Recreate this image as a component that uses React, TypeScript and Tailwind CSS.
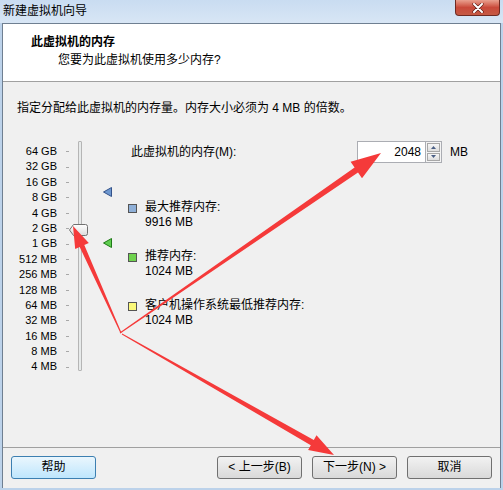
import React from 'react';

const sizes = ['64 GB', '32 GB', '16 GB', '8 GB', '4 GB', '2 GB', '1 GB', '512 MB', '256 MB', '128 MB', '64 MB', '32 MB', '16 MB', '8 MB', '4 MB'];

// tapered arrow polygon, thin at start, head at end
const arrowPoints = (x1: number, y1: number, x2: number, y2: number, w0: number, w1: number, headLen: number, headW: number) => {
    const dx = x2 - x1;
    const dy = y2 - y1;
    const len = Math.hypot(dx, dy);
    const ux = dx / len;
    const uy = dy / len;
    const nx = -uy;
    const ny = ux;
    const bx = x2 - ux * headLen;
    const by = y2 - uy * headLen;
    const pts = [
        [x1 + nx * w0 / 2, y1 + ny * w0 / 2],
        [bx + nx * w1 / 2, by + ny * w1 / 2],
        [bx + nx * headW / 2, by + ny * headW / 2],
        [x2, y2],
        [bx - nx * headW / 2, by - ny * headW / 2],
        [bx - nx * w1 / 2, by - ny * w1 / 2],
        [x1 - nx * w0 / 2, y1 - ny * w0 / 2],
    ];
    return pts.map(p => `${p[0].toFixed(1)},${p[1].toFixed(1)}`).join(' ');
};

const LegendItem: React.FC<{ color: string; title: string; value: string }> = ({ color, title, value }) => (
    <div className="flex items-start">
        <div className="mt-[4px] w-[9px] h-[9px] flex items-center justify-center" style={{ border: '1px solid #555' }}>
            <div className="w-[7px] h-[7px]" style={{ background: color }} />
        </div>
        <div className="ml-[8px] leading-[15px]">
            <div>{title}</div>
            <div>{value}</div>
        </div>
    </div>
);

const WinButton: React.FC<{ label: string; focused?: boolean }> = ({ label, focused }) => (
    <div
        className={`w-[85px] h-[23px] rounded-[3px] flex items-center justify-center text-[12px] border ${
            focused
                ? 'border-[#3c7fb1] bg-gradient-to-b from-[#eaf6fd] to-[#bee6fd]'
                : 'border-[#707070] bg-gradient-to-b from-[#f2f2f2] to-[#d9d9d9]'
        }`}
    >
        {label}
    </div>
);

export default function App() {
    return (
        <div className="relative w-[503px] h-[490px] overflow-hidden bg-[#bcd2ea] font-['Liberation_Sans','Noto_Sans_CJK_SC',sans-serif] text-black">
            {/* title bar */}
            <div className="h-[23px] flex items-start justify-between bg-gradient-to-b from-[#c9dcf1] to-[#d8e6f5]">
                <div className="pl-[3px] pt-[3px] text-[12px] leading-[16px]">新建虚拟机向导</div>
                <div className="mr-[3px] w-[45px] h-[16px] rounded-b-[4px] border border-t-0 border-[#6e2a22] bg-gradient-to-b from-[#e9a08f] via-[#c9493a] to-[#c55a44] flex items-center justify-center">
                    <svg width="12" height="10" viewBox="0 0 12 10">
                        <path d="M2 1 L10 9 M10 1 L2 9" stroke="#5a1a12" strokeWidth="3.2" strokeLinecap="round" />
                        <path d="M2 1 L10 9 M10 1 L2 9" stroke="#ffffff" strokeWidth="2" strokeLinecap="round" />
                    </svg>
                </div>
            </div>

            {/* client area */}
            <div className="mx-[2px] h-[465px] border border-[#6f7f91] border-b-0 flex flex-col bg-[#f0f0f0]">
                {/* header */}
                <div className="h-[58px] bg-white border-b border-[#a0a0a0] text-[12px] leading-[16px]">
                    <div className="pl-[28px] pt-[10px] font-bold">此虚拟机的内存</div>
                    <div className="pl-[55px] pt-[2px]">您要为此虚拟机使用多少内存?</div>
                </div>

                {/* body */}
                <div className="flex-1 text-[12px]">
                    <div className="pl-[14px] pt-[18px] leading-[16px]">指定分配给此虚拟机的内存量。内存大小必须为 4 MB 的倍数。</div>

                    <div className="flex mt-[28px]">
                        {/* slider */}
                        <div className="relative flex w-[112px]">
                            <div className="w-[54px] text-right text-[11px]">
                                {sizes.map(s => (
                                    <div key={s} className="h-[15.4px] leading-[15.4px]">{s}</div>
                                ))}
                            </div>
                            <div className="ml-[9px] w-[4px]">
                                {sizes.map(s => (
                                    <div key={s} className="h-[15.4px] flex items-center">
                                        <div className="w-[3px] h-[1px] bg-[#a8a8a8]" />
                                    </div>
                                ))}
                            </div>
                            <div className="ml-[8px] -mt-[3px] w-[4px] h-[230px] border border-[#b5b5b5] bg-[#e7eaea] rounded-[1px]" />
                            {/* thumb */}
                            <svg className="absolute left-[66px] top-[80px]" width="19" height="12" viewBox="0 0 19 12">
                                <defs>
                                    <linearGradient id="th" x1="0" y1="0" x2="0" y2="1">
                                        <stop offset="0" stopColor="#ffffff" />
                                        <stop offset="1" stopColor="#dcdcdc" />
                                    </linearGradient>
                                </defs>
                                <path d="M0.5 6 L4.5 0.5 H16.5 Q18.5 0.5 18.5 2.5 V9.5 Q18.5 11.5 16.5 11.5 H4.5 Z" fill="url(#th)" stroke="#707070" />
                            </svg>
                            {/* markers */}
                            <svg className="absolute left-[100px] top-[43px]" width="9" height="10" viewBox="0 0 9 10">
                                <path d="M0.5 5 L8.5 0.5 V9.5 Z" fill="#6d97cf" stroke="#33528a" />
                            </svg>
                            <svg className="absolute left-[100px] top-[94px]" width="9" height="10" viewBox="0 0 9 10">
                                <path d="M0.5 5 L8.5 0.5 V9.5 Z" fill="#5fcd4f" stroke="#1f7a17" />
                            </svg>
                        </div>

                        {/* right content */}
                        <div className="ml-[16px] w-[340px] -mt-[3px]">
                            <div className="flex items-center h-[22px]">
                                <div className="w-[226px]">此虚拟机的内存(M):</div>
                                <div className="flex h-[22px]">
                                    <div className="w-[68px] h-[22px] bg-white border border-[#abadb3] border-r-0 flex items-center justify-end pr-[4px]">2048</div>
                                    <div className="w-[17px] h-[22px] border border-[#abadb3] bg-[#f4f4f4] flex flex-col p-[1px] gap-[1px]">
                                        <div className="flex-1 border border-[#a7a7a7] bg-gradient-to-b from-[#f6f6f6] to-[#dedede] flex items-center justify-center">
                                            <svg width="5" height="3" viewBox="0 0 5 3"><path d="M0 3 L2.5 0 L5 3 Z" fill="#4a5f85" /></svg>
                                        </div>
                                        <div className="flex-1 border border-[#a7a7a7] bg-gradient-to-b from-[#f6f6f6] to-[#dedede] flex items-center justify-center">
                                            <svg width="5" height="3" viewBox="0 0 5 3"><path d="M0 0 L5 0 L2.5 3 Z" fill="#4a5f85" /></svg>
                                        </div>
                                    </div>
                                </div>
                                <div className="ml-[8px]">MB</div>
                            </div>

                            <div className="mt-[37px] flex flex-col gap-[19px] -ml-[3px]">
                                <LegendItem color="#8fb0d8" title="最大推荐内存:" value="9916 MB" />
                                <LegendItem color="#6fd24e" title="推荐内存:" value="1024 MB" />
                                <LegendItem color="#fbf97a" title="客户机操作系统最低推荐内存:" value="1024 MB" />
                            </div>
                        </div>
                    </div>
                </div>

                {/* footer */}
                <div className="h-[41px] border-t border-[#a0a0a0] flex items-center px-[8px] pb-[2px]">
                    <WinButton label="帮助" focused />
                    <div className="ml-auto flex gap-[10px]">
                        <WinButton label="< 上一步(B)" />
                        <WinButton label="下一步(N) >" />
                        <WinButton label="取消" />
                    </div>
                </div>
            </div>

            {/* annotation arrows */}
            <svg className="absolute left-0 top-0 pointer-events-none" width="503" height="490" viewBox="0 0 503 490">
                <polygon points={arrowPoints(121, 333, 73, 226, 1, 5, 22, 15)} fill="#f53a3a" />
                <polygon points={arrowPoints(120, 333, 381, 153, 1, 6, 30, 20)} fill="#f53a3a" />
                <polygon points={arrowPoints(122, 334, 334, 455, 1, 6, 25, 17)} fill="#f53a3a" />
            </svg>
        </div>
    );
}
